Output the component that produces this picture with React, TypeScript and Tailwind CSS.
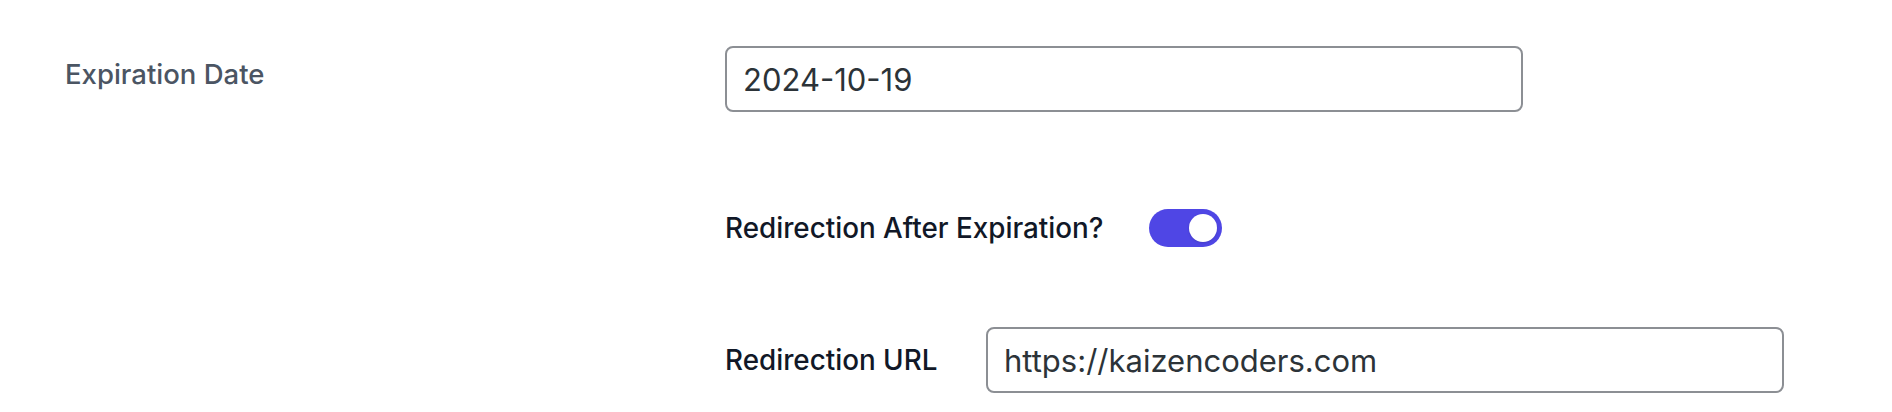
import { useState } from 'react'

export default function App() {
  const [redirect, setRedirect] = useState(true)
  const [date, setDate] = useState('2024-10-19')
  const [url, setUrl] = useState('https://kaizencoders.com')

  return (
    <div className="w-[1892px] h-[412px] bg-white font-['Inter',sans-serif] flex pl-[65px] pt-[46px]">
      <div className="w-[660px] pt-[10px] text-[27.5px] leading-[36px] font-medium text-[#4b5563]">
        Expiration Date
      </div>
      <div className="flex flex-col">
        <input
          type="text"
          value={date}
          onChange={e => setDate(e.target.value)}
          className="w-[798px] h-[66px] px-[16px] border-2 border-[#8c8f94] rounded-[8px] text-[31px] text-[#2c3338] outline-none"
        />

        <div className="mt-[97px] flex items-center">
          <span className="w-[424px] text-[27.8px] leading-[38px] font-medium text-[#111827]">
            Redirection After Expiration?
          </span>
          <button
            type="button"
            onClick={() => setRedirect(v => !v)}
            className={`w-[73px] h-[38px] rounded-full flex items-center px-[5px] ${redirect ? 'bg-[#4f46e5] justify-end' : 'bg-gray-300 justify-start'}`}
          >
            <span className="w-[28px] h-[28px] rounded-full bg-white shadow-sm" />
          </button>
        </div>

        <div className="mt-[80px] flex items-center">
          <span className="w-[261px] text-[27.8px] leading-[38px] font-medium text-[#111827]">
            Redirection URL
          </span>
          <input
            type="text"
            value={url}
            onChange={e => setUrl(e.target.value)}
            className="w-[798px] h-[66px] px-[16px] border-2 border-[#8c8f94] rounded-[8px] text-[31px] text-[#2c3338] outline-none"
          />
        </div>
      </div>
    </div>
  )
}
